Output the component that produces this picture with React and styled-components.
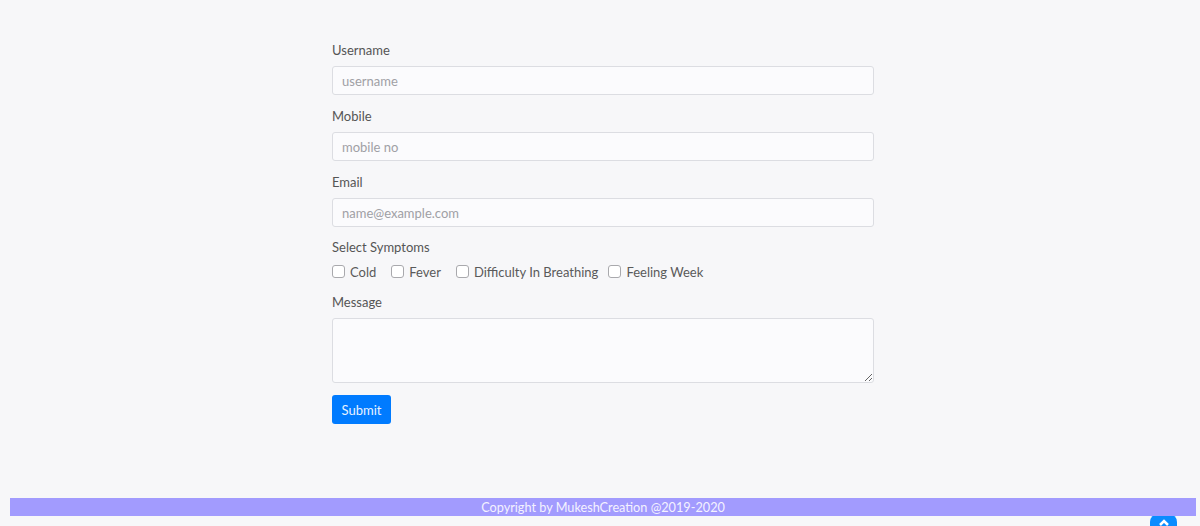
import React from "react";
import styled, { createGlobalStyle } from "styled-components";

const Global = createGlobalStyle`
  html, body { margin: 0; padding: 0; background: #f7f7f9; }
  body { font-family: Lato, "Open Sans", sans-serif; color: #444; }
  * { box-sizing: border-box; }
`;

const Page = styled.div`
  position: relative;
  height: 526px;
  overflow: hidden;
  display: flex;
  flex-direction: column;
  padding: 0 4px 0 10px;
`;

const Main = styled.main`
  flex: 1;
  display: flex;
  justify-content: center;
  padding-top: 41px;
`;

const Form = styled.form`
  width: 542px;
  display: flex;
  flex-direction: column;
`;

const Group = styled.div`
  display: flex;
  flex-direction: column;
  margin-bottom: ${(p) => p.$mb ?? 12}px;
`;

const Label = styled.label`
  font-size: 13px;
  line-height: 19px;
  color: #555;
  margin-bottom: ${(p) => p.$mb ?? 6}px;
`;

const Input = styled.input`
  height: 29px;
  width: 100%;
  padding: 0 9px;
  font-family: inherit;
  font-size: 13px;
  color: #555;
  background: #fbfbfd;
  border: 1px solid #dcdde2;
  border-radius: 3px;
  outline: none;
  &::placeholder { color: #a0a0a5; }
`;

const TextArea = styled.textarea`
  display: block;
  height: 65px;
  width: 100%;
  font-family: inherit;
  background: #fbfbfd;
  border: 1px solid #dcdde2;
  border-radius: 3px;
  resize: vertical;
  outline: none;
`;

const CheckRow = styled.div`
  display: flex;
  align-items: center;
  height: 19px;
`;

const CheckItem = styled.label`
  display: flex;
  align-items: center;
  font-size: 13px;
  color: #5a5a5a;
  margin-right: ${(p) => p.$mr}px;
`;

const Box = styled.span`
  width: 13px;
  height: 13px;
  border: 1px solid #a9a9ad;
  border-radius: 3px;
  background: #fff;
  margin-right: 5px;
`;

const Button = styled.button`
  align-self: flex-start;
  width: 59px;
  height: 29px;
  background: #007bff;
  color: #e8f2ff;
  border: none;
  border-radius: 3px;
  font-family: inherit;
  font-size: 13px;
`;

const Footer = styled.footer`
  position: relative;
  z-index: 2;
  height: 18px;
  margin-bottom: 10px;
  background: #a29bfe;
  color: #f4f2ff;
  font-size: 12.7px;
  line-height: 18px;
  text-align: center;
`;

const TopBtn = styled.div`
  position: absolute;
  left: 1150px;
  top: 514px;
  width: 27px;
  height: 30px;
  border-radius: 8px;
  background: #0a8cff;
  display: flex;
  justify-content: center;
  padding-top: 4px;
`;

const symptoms = [
  ["Cold", 15],
  ["Fever", 15],
  ["Difficulty In Breathing", 10],
  ["Feeling Week", 0],
];

export default function App() {
  return (
    <Page>
      <Global />
      <Main>
        <Form onSubmit={(e) => e.preventDefault()}>
          <Group>
            <Label>Username</Label>
            <Input placeholder="username" />
          </Group>
          <Group>
            <Label>Mobile</Label>
            <Input placeholder="mobile no" />
          </Group>
          <Group $mb={11}>
            <Label>Email</Label>
            <Input placeholder="name@example.com" />
          </Group>
          <Group>
            <Label $mb={5}>Select Symptoms</Label>
            <CheckRow>
              {symptoms.map(([s, mr]) => (
                <CheckItem key={s} $mr={mr}>
                  <Box />
                  {s}
                </CheckItem>
              ))}
            </CheckRow>
          </Group>
          <Group>
            <Label>Message</Label>
            <TextArea />
          </Group>
          <Button type="submit">Submit</Button>
        </Form>
      </Main>
      <Footer>Copyright by MukeshCreation @2019-2020</Footer>
      <TopBtn>
        <svg width="12" height="8" viewBox="0 0 12 8">
          <path d="M2 7 L6 3 L10 7" stroke="#fff" strokeWidth="2.5" fill="none" />
        </svg>
      </TopBtn>
    </Page>
  );
}
